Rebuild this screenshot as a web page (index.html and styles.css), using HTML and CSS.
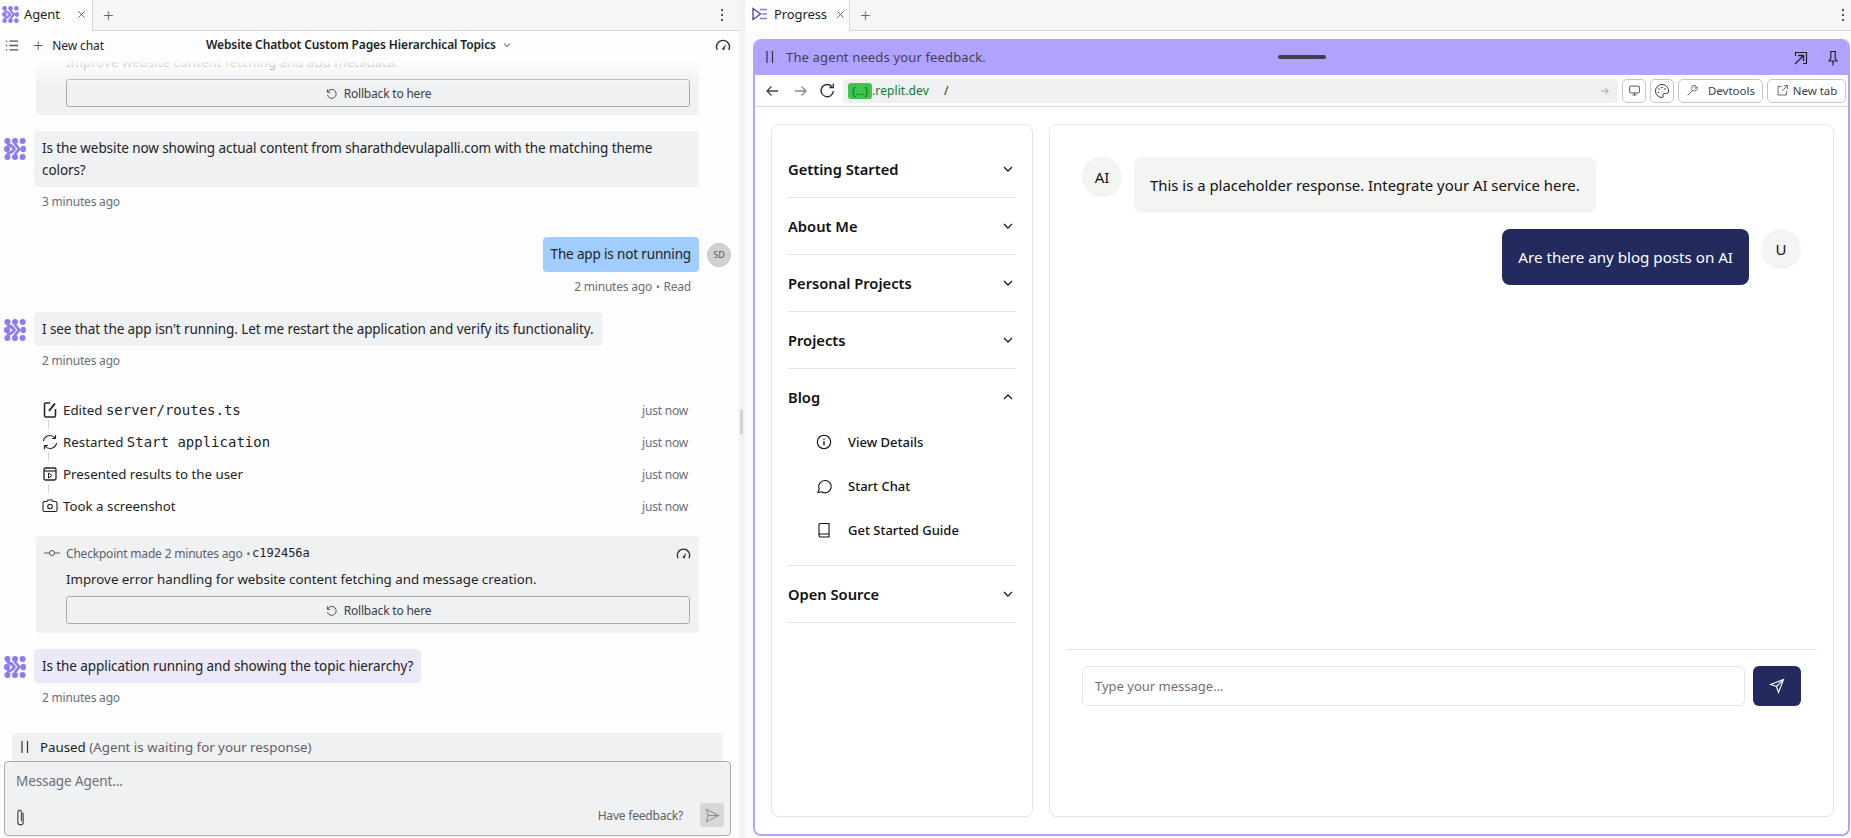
FILE: index.html
```html
<!DOCTYPE html>
<html lang="en">
<head>
<meta charset="utf-8">
<title>Agent - Progress</title>
<link rel="stylesheet" href="styles.css">
</head>
<body>
<svg class="defs" width="0" height="0" aria-hidden="true">
  <defs>
    <symbol id="logo" viewBox="0 0 22 22">
      <g fill="#8f7bf5">
        <circle cx="3.400" cy="3" r="3"/><circle cx="11" cy="3" r="3"/><circle cx="18.600" cy="3" r="3"/>
        <ellipse cx="3" cy="11" rx="3" ry="3.200"/><ellipse cx="19.300" cy="11" rx="2.700" ry="3.200"/>
        <circle cx="3.400" cy="19" r="3"/><circle cx="11" cy="19" r="3"/><circle cx="18.600" cy="19" r="3"/>
      </g>
      <path d="M4 6.500C7 7 9 9 10.500 11C9 13 7 15 4 15.500M11.500 6.500C13 8 14 10 15.500 11C14 12 13 14 11.500 15.500" fill="none" stroke="#8f7bf5" stroke-width="2.800" stroke-linecap="round" stroke-linejoin="round"/>
    </symbol>
    <symbol id="rollback" viewBox="0 0 16 16"><path d="M3 3v3.500h3.500M3.200 6.300A5.500 5.500 0 1 1 3 10" fill="none" stroke="currentColor" stroke-width="1.100"/></symbol>
    <symbol id="gauge" viewBox="0 0 16 16"><path d="M2.300 13A6.500 6.500 0 1 1 13.700 13" fill="none" stroke="currentColor" stroke-width="1.400"/><path d="M6.800 12.200L10.800 7.200 9.300 13.200z" fill="currentColor"/></symbol>
    <symbol id="chev" viewBox="0 0 16 16"><path d="M4 6l4 4 4-4" fill="none" stroke="currentColor" stroke-width="1.400"/></symbol>
    <symbol id="pause" viewBox="0 0 12 16"><path d="M3 2v12M8.500 2v12" fill="none" stroke="currentColor" stroke-width="1.200"/></symbol>
  </defs>
</svg>
<div class="app">
  <section class="agent">
    <div class="tabbar tabbar-agent">
      <div class="tab tab-agent">
        <svg class="tab-logo"><use href="#logo"/></svg>
        <span class="tab-name">Agent</span>
        <svg class="tab-x" viewBox="0 0 10 10"><path d="M1.500 1.500l7 7M8.500 1.500l-7 7" stroke="currentColor" fill="none"/></svg>
      </div>
      <span class="tab-plus">+</span>
      <span class="kebab"><i></i><i></i><i></i></span>
    </div>
    <div class="chat-head">
      <svg class="list-ic" viewBox="0 0 16 14"><path d="M1 2h1.500M1 7h1.500M1 12h1.500M5 2h10M5 7h10M5 12h10" stroke="#555" stroke-width="1.600" fill="none"/></svg>
      <span class="head-plus">+</span>
      <span class="new-chat">New chat</span>
      <span class="chat-title">Website Chatbot Custom Pages Hierarchical Topics <svg class="title-chev"><use href="#chev"/></svg></span>
      <svg class="gauge-head"><use href="#gauge"/></svg>
    </div>
    <div class="thread">
      <div class="fade"></div>
      <div class="checkpoint checkpoint-top">
        <p class="cp-desc cp-faded">Improve website content fetching and add metadata.</p>
        <button class="rollback"><svg class="rb-ic"><use href="#rollback"/></svg>Rollback to here</button>
      </div>
      <div class="msg msg-a1">
        <svg class="msg-logo"><use href="#logo"/></svg>
        <div class="msg-col">
          <div class="bubble">Is the website now showing actual content from sharathdevulapalli.com with the matching theme colors?</div>
          <div class="time">3 minutes ago</div>
        </div>
      </div>
      <div class="msg-user">
        <div class="user-row">
          <div class="bubble-user">The app is not running</div>
          <span class="sd">SD</span>
        </div>
        <div class="time time-user">2 minutes ago <b>•</b> Read</div>
      </div>
      <div class="msg msg-a2">
        <svg class="msg-logo"><use href="#logo"/></svg>
        <div class="msg-col">
          <div class="bubble bubble-fit">I see that the app isn't running. Let me restart the application and verify its functionality.</div>
          <div class="time">2 minutes ago</div>
        </div>
      </div>
      <ul class="actions">
        <li class="action">
          <svg class="act-ic" viewBox="0 0 16 18"><path d="M8 2H4a1.500 1.500 0 0 0-1.500 1.500v11A1.500 1.500 0 0 0 4 16h8a1.500 1.500 0 0 0 1.500-1.500V8" fill="none" stroke="#222" stroke-width="1.500"/><path d="M7 10l6-7.500" stroke="#222" stroke-width="2"/></svg>
          <span class="act-text">Edited <code>server/routes.ts</code></span><span class="act-time">just now</span>
        </li>
        <li class="action">
          <svg class="act-ic" viewBox="0 0 16 18"><path d="M1.500 8A6.500 6.500 0 0 1 13 5M14.500 10A6.500 6.500 0 0 1 3 13M13.500 2v3.500H10M2.500 16v-3.500H6" fill="none" stroke="#222" stroke-width="1.200"/></svg>
          <span class="act-text">Restarted <code>Start application</code></span><span class="act-time">just now</span>
        </li>
        <li class="action">
          <svg class="act-ic" viewBox="0 0 16 18"><rect x="2" y="3" width="12" height="12" rx="1.500" fill="none" stroke="#222" stroke-width="1.300"/><path d="M2 6h12" stroke="#222" stroke-width="1.200"/><path d="M6.500 8l3.500 2.500-3.500 2.500z" fill="none" stroke="#222"/></svg>
          <span class="act-text">Presented results to the user</span><span class="act-time">just now</span>
        </li>
        <li class="action action-last">
          <svg class="act-ic" viewBox="0 0 16 18"><path d="M1 6a1.500 1.500 0 0 1 1.500-1.500H5L6 3h4l1 1.500h2.500A1.500 1.500 0 0 1 15 6v7a1.500 1.500 0 0 1-1.500 1.500h-11A1.500 1.500 0 0 1 1 13z" fill="none" stroke="#222" stroke-width="1.100"/><circle cx="8" cy="9.500" r="2.300" fill="none" stroke="#222" stroke-width="1.100"/></svg>
          <span class="act-text">Took a screenshot</span><span class="act-time">just now</span>
        </li>
      </ul>
      <div class="checkpoint">
        <div class="cp-head">
          <svg class="cp-ic" viewBox="0 0 16 8"><path d="M0 4h5M11 4h5" stroke="#555"/><circle cx="8" cy="4" r="2.500" fill="none" stroke="#555"/></svg>
          <span class="cp-made">Checkpoint made</span>
          <span class="cp-when">2 minutes ago <b>•</b></span>
          <code class="cp-hash">c192456a</code>
          <svg class="cp-gauge"><use href="#gauge"/></svg>
        </div>
        <p class="cp-desc">Improve error handling for website content fetching and message creation.</p>
        <button class="rollback"><svg class="rb-ic"><use href="#rollback"/></svg>Rollback to here</button>
      </div>
      <div class="msg msg-a3">
        <svg class="msg-logo"><use href="#logo"/></svg>
        <div class="msg-col">
          <div class="bubble bubble-fit bubble-active">Is the application running and showing the topic hierarchy?</div>
          <div class="time">2 minutes ago</div>
        </div>
      </div>
    </div>
    <div class="paused"><svg class="paused-ic"><use href="#pause"/></svg><span>Paused <em>(Agent is waiting for your response)</em></span></div>
    <div class="composer">
      <div class="placeholder">Message Agent...</div>
      <div class="composer-foot">
        <svg class="clip" viewBox="0 0 12 18"><path d="M8.500 4.500v9a2.500 2.500 0 0 1-5 0V4a1.700 1.700 0 0 1 3.400 0v8.500" fill="none" stroke="#444" stroke-width="1.100"/></svg>
        <span class="feedback">Have feedback?</span>
        <span class="send-off"><svg viewBox="0 0 16 16"><path d="M1.500 1.500L14.500 8 1.500 14.500 3.500 8zM3.500 8h11" fill="none" stroke="#8d8d8d" stroke-width="1.100"/></svg></span>
      </div>
    </div>
  </section>

  <div class="gutter"><span class="grip"></span></div>

  <section class="progress">
    <div class="tabbar">
      <div class="tab tab-progress">
        <svg class="tab-prog" viewBox="0 0 16 14"><path d="M1 1.500L8.500 7 1 12.500z" fill="none" stroke="#4d3fb0" stroke-width="1.300"/><path d="M8 2.500h7M10 7h5M8 11.500h7" stroke="#8a7dd8" stroke-width="1.500"/></svg>
        <span class="tab-name">Progress</span>
        <svg class="tab-x" viewBox="0 0 10 10"><path d="M1.500 1.500l7 7M8.500 1.500l-7 7" stroke="currentColor" fill="none"/></svg>
      </div>
      <span class="tab-plus">+</span>
      <span class="kebab"><i></i><i></i><i></i></span>
    </div>
    <div class="preview-wrap">
      <div class="preview">
        <div class="notice">
          <svg class="notice-pause"><use href="#pause"/></svg>
          <span class="notice-text">The agent needs your feedback.</span>
          <span class="drag"></span>
          <svg class="notice-ic" viewBox="0 0 16 16"><path d="M2.500 6V2.500h11v11H10" fill="none" stroke="#222" stroke-width="1.200"/><path d="M2 14l8-8M5 5.500h5.500V11" fill="none" stroke="#222" stroke-width="1.300"/></svg>
          <svg class="notice-ic notice-pin" viewBox="0 0 16 16"><path d="M5 1.500h6M5.800 1.500v7L4 11h8l-1.800-2.500v-7M8 11v4.500" fill="none" stroke="#222" stroke-width="1.200"/></svg>
        </div>
        <div class="browser">
          <svg class="nav-ic" viewBox="0 0 14 14"><path d="M13 7H2M6.500 2.500L2 7l4.500 4.500" fill="none" stroke="#444" stroke-width="1.300"/></svg>
          <svg class="nav-ic nav-fwd" viewBox="0 0 14 14"><path d="M1 7h11M7.500 2.500L12 7l-4.500 4.500" fill="none" stroke="#888" stroke-width="1.300"/></svg>
          <svg class="nav-ic nav-reload" viewBox="0 0 16 16"><path d="M13.500 8.500A5.800 5.800 0 1 1 12 4.200M13.500 1.500v3.700H9.800" fill="none" stroke="#333" stroke-width="1.300"/></svg>
          <div class="url">
            <span class="url-chip">{...}</span><span class="url-host">.replit.dev</span><span class="url-path">/</span>
            <svg class="url-go" viewBox="0 0 12 12"><path d="M1 6h9M6.500 2.500L10 6l-3.500 3.500" fill="none" stroke="#999" stroke-width="1.100"/></svg>
          </div>
          <button class="tool tool-icon"><svg class="tool-ic" viewBox="0 0 16 16"><rect x="2" y="2.500" width="12" height="8.500" rx="1" fill="none" stroke="#444" stroke-width="1.100"/><path d="M8 11v2.500M5.500 13.500h5" stroke="#444" stroke-width="1.100"/></svg></button>
          <button class="tool tool-icon"><svg class="tool-ic tool-ic-big" viewBox="0 0 16 16"><path d="M8 1.500a6.500 6.500 0 0 0 0 13c1.500 0 1.500-1 1-2-.5-1.200.3-2 1.500-2h2c1 0 2-.7 2-2.500C14.500 4 11.500 1.500 8 1.500z" fill="none" stroke="#333" stroke-width="1"/><circle cx="5" cy="6" r=".8" fill="#333"/><circle cx="8" cy="4.500" r=".8" fill="#333"/><circle cx="11" cy="6" r=".8" fill="#333"/><circle cx="4.500" cy="9.500" r=".8" fill="#333"/></svg></button>
          <button class="tool tool-dev"><svg class="tool-ic" viewBox="0 0 16 16"><path d="M2 14l6-6a3.500 3.500 0 0 1 4.500-5.500L10.500 4.500l1 1 2-2A3.500 3.500 0 0 1 8.500 8" fill="none" stroke="#555" stroke-width="1.100"/></svg>Devtools</button>
          <button class="tool tool-new"><svg class="tool-ic" viewBox="0 0 16 16"><path d="M7 3H2.500v10.500H13V9M9.500 2H14v4.500M14 2L7.500 8.500" fill="none" stroke="#555" stroke-width="1.100"/></svg>New tab</button>
        </div>
        <div class="site">
          <aside class="side">
            <div class="acc"><span>Getting Started</span><svg class="acc-chev"><use href="#chev"/></svg></div>
            <div class="acc"><span>About Me</span><svg class="acc-chev"><use href="#chev"/></svg></div>
            <div class="acc"><span>Personal Projects</span><svg class="acc-chev"><use href="#chev"/></svg></div>
            <div class="acc"><span>Projects</span><svg class="acc-chev"><use href="#chev"/></svg></div>
            <div class="acc-open">
              <div class="acc acc-noline"><span>Blog</span><svg class="acc-chev acc-up"><use href="#chev"/></svg></div>
              <div class="subs">
                <div class="sub"><svg class="sub-ic" viewBox="0 0 16 16"><circle cx="8" cy="8" r="6.700" fill="none" stroke="#111" stroke-width="1.100"/><path d="M8 7.200v4M8 4.500v1.200" stroke="#111" stroke-width="1.400"/></svg>View Details</div>
                <div class="sub"><svg class="sub-ic" viewBox="0 0 16 16"><path d="M2 14.500l1.200-3.500A6.200 6.200 0 1 1 5.500 13.800z" fill="none" stroke="#111" stroke-width="1.100"/></svg>Start Chat</div>
                <div class="sub"><svg class="sub-ic" viewBox="0 0 16 16"><path d="M3 13V2.500A1 1 0 0 1 4 1.500h9v13.500H4.500A1.500 1.500 0 0 1 3 13.500 1.500 1.500 0 0 1 4.500 12H13" fill="none" stroke="#111" stroke-width="1.100"/></svg>Get Started Guide</div>
              </div>
            </div>
            <div class="acc"><span>Open Source</span><svg class="acc-chev"><use href="#chev"/></svg></div>
          </aside>
          <main class="main">
            <div class="messages">
              <div class="row">
                <span class="avatar">AI</span>
                <div class="site-bubble">This is a placeholder response. Integrate your AI service here.</div>
              </div>
              <div class="row row-user">
                <div class="site-bubble site-bubble-user">Are there any blog posts on AI</div>
                <span class="avatar">U</span>
              </div>
            </div>
            <div class="input-area">
              <div class="site-input">Type your message...</div>
              <button class="site-send"><svg viewBox="0 0 16 16"><path d="M14.500 1.500L9.500 14.500 7.500 8.500 1.500 6.500zM14.500 1.500L7.500 8.500" fill="none" stroke="#fff" stroke-width="1.100"/></svg></button>
            </div>
          </main>
        </div>
      </div>
    </div>
  </section>
</div>
</body>
</html>
```
FILE: styles.css
```css
* { box-sizing: border-box; }
html, body { margin: 0; height: 100%; overflow: hidden; }
body { font-family: "Noto Sans", "Liberation Sans", sans-serif; color: #1c1f24; background: #f0f1f1; }
.defs { position: absolute; }
svg { display: block; flex: none; }
button { font: inherit; color: inherit; background: none; padding: 0; }
p, ul { margin: 0; padding: 0; list-style: none; }
code { font-family: "DejaVu Sans Mono", "Liberation Mono", monospace; }

.app { display: flex; height: 838px; }
.agent { width: 739px; flex: none; background: #fdfdfd; display: flex; flex-direction: column; height: 838px; }
.gutter { width: 6px; flex: none; background: #f0f1f1; display: flex; align-items: center; justify-content: center; }
.grip { width: 3px; height: 24px; background: #d2d3d4; margin: 6px 0 0 -1px; }
.progress { flex: 1; min-width: 0; display: flex; flex-direction: column; background: #fbfbfb; }

.tabbar { height: 31px; flex: none; display: flex; align-items: center; background: #f5f7f6; border-bottom: 1px solid #d5d7d8; padding-right: 6px; }
.tabbar-agent { padding-right: 15px; }
.tab { height: 31px; display: flex; align-items: center; background: #fdfdfd; border-right: 1px solid #d5d7d8; margin-bottom: -1px; padding-bottom: 3px; }
.tab-agent { width: 93px; padding-left: 2px; }
.tab-progress { width: 105px; padding-left: 7px; }
.tab-progress .tab-x { margin-right: 4px; }
.tab-logo { width: 17px; height: 17px; margin-right: 5px; }
.tab-prog { width: 16px; height: 14px; margin-right: 6px; }
.tab-name { font-size: 13px; letter-spacing: -.1px; flex: 1; }
.tab-x { width: 9px; height: 9px; color: #555; margin-right: 6px; }
.tab-plus { font-size: 19px; line-height: 1; color: #666; margin-left: 10px; font-weight: 300; }
.kebab { margin-left: auto; display: flex; flex-direction: column; gap: 3px; padding-right: 1px; }
.kebab i { width: 2px; height: 2px; background: #555; display: block; }

.chat-head { height: 23px; flex: none; position: relative; display: flex; align-items: center; padding: 5px 8px 0 5px; font-size: 12px; }
.list-ic { width: 14px; height: 13px; }
.head-plus { font-size: 18px; line-height: 1; color: #555; margin-left: 14px; font-weight: 300; }
.new-chat { margin-left: 9px; letter-spacing: -.1px; }
.chat-title { position: absolute; left: 206px; top: 5px; display: flex; align-items: center; gap: 5px; font-weight: 600; font-size: 12px; letter-spacing: -.12px; white-space: nowrap; }
.title-chev { width: 12px; height: 12px; color: #666; }
.gauge-head { width: 16px; height: 16px; margin-left: auto; margin-right: 0; color: #333; }

.thread { flex: 1; min-height: 0; position: relative; overflow: hidden; display: flex; flex-direction: column; justify-content: flex-end; padding-bottom: 26px; }
.fade { position: absolute; left: 0; right: 0; top: 0; height: 32px; background: linear-gradient(#fdfdfd 20%, rgba(253,253,253,0)); z-index: 1; }
.checkpoint { margin: 0 40px 0 36px; background: #f0f1f3; border-radius: 4px; padding: 7px 9px 9px 30px; flex: none; }
.checkpoint-top { padding-top: 0; padding-bottom: 8px; border-radius: 0 0 4px 4px; }
.cp-head { display: flex; align-items: center; height: 20px; margin-left: -22px; font-size: 12px; color: #5c6068; }
.cp-ic { width: 16px; height: 8px; margin-right: 6px; }
.cp-made { margin-right: 3px; letter-spacing: -.2px; }
.cp-when { letter-spacing: -.2px; margin-right: 1px; }
.cp-when b, .time b { font-weight: 400; font-size: 10px; margin: 0 1px; }
.cp-hash { font-size: 12px; color: #1c1f24; }
.cp-gauge { width: 15px; height: 15px; margin-left: auto; margin-right: -1px; color: #333; }
.cp-desc { font-size: 13.300px; line-height: 22px; margin: 5px 0 6px; }
.cp-faded { color: #333; margin: 0 0 9px; line-height: 16px; }
.rollback { width: 100%; height: 28px; border: 1px solid #a9abaf; border-radius: 3px; display: flex; align-items: center; justify-content: center; gap: 6px; font-size: 12px; color: #3a3d44; letter-spacing: -.2px; }
.rb-ic { width: 13px; height: 13px; }

.msg { display: flex; padding-left: 4px; margin-right: 40px; flex: none; }
.msg-a1 { margin-top: 16px; }
.msg-a2 { margin-top: 16px; }
.msg-a3 { margin-top: 16px; }
.msg-logo { width: 22px; height: 22px; margin: 7px 8px 0 0; }
.msg-col { flex: 1; min-width: 0; display: flex; flex-direction: column; align-items: flex-start; }
.bubble { background: #f0f1f3; border-radius: 4px; padding: 6px 8px; font-size: 13.500px; line-height: 22px; letter-spacing: -.08px; }
.bubble-fit { width: fit-content; }
.bubble-active { background: #ebe9f7; }
.time { font-size: 12px; line-height: 18px; color: #6b6f76; margin: 6px 0 0 8px; letter-spacing: -.2px; }

.msg-user { margin-top: 26px; padding-right: 8px; display: flex; flex-direction: column; align-items: flex-end; flex: none; }
.user-row { display: flex; align-items: center; gap: 8px; }
.bubble-user { background: #a0cdfb; border-radius: 4px; height: 35px; padding: 0 8px; font-size: 13.500px; line-height: 35px; letter-spacing: -.15px; }
.sd { width: 24px; height: 24px; border-radius: 50%; background: #d0d1d2; color: #555; font-size: 9px; display: flex; align-items: center; justify-content: center; border: 1px solid #c4c5c6; }
.time-user { margin: 6px 40px 0 0; }

.actions { margin: 24px 40px 14px 42px; flex: none; }
.action { display: flex; align-items: center; height: 32px; position: relative; }
.action::after { content: ""; position: absolute; left: 6px; top: 26px; height: 9px; width: 1px; background: #d4d5d7; }
.action-last::after { display: none; }
.act-ic { width: 16px; height: 18px; margin-right: 5px; }
.act-text { font-size: 13.300px; flex: 1; }
.act-text code { font-size: 14px; }
.act-time { font-size: 12px; color: #6b6f76; margin-right: 11px; letter-spacing: -.2px; }

.paused { margin: 0 16px 0 12px; height: 28px; flex: none; background: #f0f1f3; border-radius: 4px 4px 0 0; display: flex; align-items: center; padding-left: 7px; font-size: 13.300px; gap: 9px; }
.paused em { font-style: normal; color: #5c6068; }
.paused-ic { width: 12px; height: 16px; color: #333; }
.composer { margin: 0 8px 2px 4px; height: 75px; flex: none; background: #f0f1f3; border: 1px solid #a9abaf; border-radius: 4px; padding: 9px 6px 8px 11px; display: flex; flex-direction: column; justify-content: space-between; }
.placeholder { font-size: 13.500px; line-height: 20px; color: #6b6f76; letter-spacing: -.1px; }
.composer-foot { display: flex; align-items: center; height: 24px; }
.clip { width: 13px; height: 19px; margin-top: 5px; margin-left: -2px; }
.feedback { margin-left: auto; font-size: 12px; color: #5c6068; letter-spacing: -.2px; margin-right: 17px; }
.send-off { width: 24px; height: 24px; background: #d6d7d9; border-radius: 3px; display: flex; align-items: center; justify-content: center; }
.send-off svg { width: 15px; height: 15px; }

.preview-wrap { flex: 1; min-height: 0; padding: 8px 1px 2px 8px; }
.preview { height: 100%; border: 2px solid #b0a3ff; border-top: 0; border-radius: 8px; background: #fff; display: flex; flex-direction: column; overflow: hidden; }
.notice { height: 36px; flex: none; margin: 0 -2px; background: #b0a3ff; display: flex; align-items: center; padding: 0 9px 0 11px; color: #444058; }
.notice-pause { width: 12px; height: 16px; color: #333; }
.notice-text { font-size: 13px; margin-left: 10px; letter-spacing: .15px; width: 492px; }
.drag { width: 48px; height: 4px; border-radius: 2px; background: #403f4c; }
.notice-ic { width: 16px; height: 16px; margin-left: auto; margin-top: 1px; }
.notice-pin { margin-left: 16px; }
.browser { height: 32px; flex: none; display: flex; align-items: center; border-bottom: 1px solid #d4d5d7; padding: 0 2px 0 10px; background: #fff; }
.nav-ic { width: 14px; height: 14px; }
.nav-fwd { margin-left: 15px; }
.nav-reload { width: 17px; height: 17px; margin-left: 11px; }
.url { flex: 1; margin-left: 7px; height: 24px; background: #eff0f2; border-radius: 4px; display: flex; align-items: center; padding: 0 8px 0 5px; font-size: 12px; }
.url-chip { width: 24px; height: 16px; background: #3cc44d; border-radius: 3px; color: #0e6b25; font-size: 11px; line-height: 16px; text-align: center; }
.url-host { color: #0f7a2c; letter-spacing: .1px; }
.url-path { margin-left: 15px; color: #333; }
.url-go { width: 10px; height: 10px; margin-left: auto; }
.tool { height: 24px; margin-left: 4px; border: 1px solid #c5c6c8; border-radius: 5px; display: flex; align-items: center; justify-content: center; font-size: 11.500px; color: #3a3d44; background: #fff; gap: 6px; flex: none; }
.tool-icon { width: 24px; }
.tool-dev { width: 85px; gap: 9px; }
.tool-new { width: 79px; gap: 4px; }
.tool-ic { width: 13px; height: 13px; }
.tool-ic-big { width: 16px; height: 16px; }

.site { flex: 1; min-height: 0; display: flex; padding: 17px 14px 17px 16px; gap: 16px; background: #fff; }
.side { width: 262px; flex: none; border: 1px solid #e4e5e5; border-radius: 8px; padding: 16px 16px 0; box-shadow: 0 1px 2px rgba(0,0,0,.04); }
.acc { height: 57px; display: flex; align-items: center; justify-content: space-between; border-bottom: 1px solid #e4e5e5; font-size: 14.700px; font-weight: 600; color: #111; }
.acc-noline { border-bottom: 0; height: 56px; }
.acc-open { border-bottom: 1px solid #e4e5e5; padding-bottom: 13px; }
.acc-chev { width: 16px; height: 16px; color: #222; }
.acc-up { transform: rotate(180deg); }
.subs { margin-top: -5px; }
.sub { height: 44px; display: flex; align-items: center; padding-left: 28px; font-size: 13px; font-weight: 500; color: #111; gap: 16px; }
.sub-ic { width: 16px; height: 16px; }
.main { flex: 1; min-width: 0; border: 1px solid #e4e5e5; border-radius: 8px; display: flex; flex-direction: column; padding: 0 16px; box-shadow: 0 1px 2px rgba(0,0,0,.04); }
.messages { height: 525px; flex: none; padding: 32px 16px 0; display: flex; flex-direction: column; gap: 16px; border-bottom: 1px solid #e4e5e5; }
.row { display: flex; align-items: flex-start; gap: 12px; }
.row-user { justify-content: flex-end; }
.avatar { width: 40px; height: 40px; border-radius: 50%; background: #f4f4f2; display: flex; align-items: center; justify-content: center; font-size: 15px; color: #111; flex: none; }
.site-bubble { height: 56px; padding: 0 16px; background: #f4f4f2; border-radius: 8px; font-size: 14.900px; line-height: 56px; color: #111; }
.site-bubble-user { background: #222a5e; color: #fff; font-size: 15.150px; }
.input-area { display: flex; gap: 8px; padding: 16px 16px 0; }
.site-input { flex: 1; height: 40px; border: 1px solid #e4e5e5; border-radius: 6px; padding: 0 12px; font-size: 13px; line-height: 38px; color: #6f6f6f; }
.site-send { width: 48px; height: 40px; border: 0; border-radius: 6px; background: #222a5e; display: flex; align-items: center; justify-content: center; }
.site-send svg { width: 16px; height: 16px; }
```
